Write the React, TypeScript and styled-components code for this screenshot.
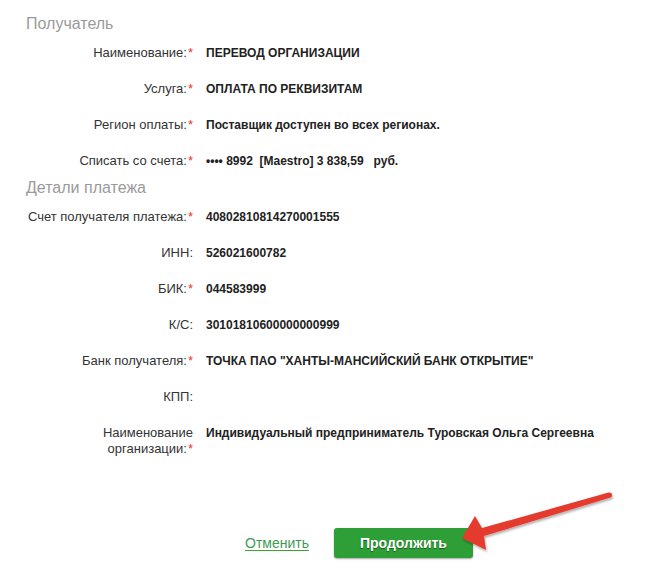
import React from "react";
import styled, { createGlobalStyle } from "styled-components";

const GlobalStyle = createGlobalStyle`
  html, body {
    margin: 0;
    padding: 0;
    background: #fff;
  }
  body {
    font-family: "Liberation Sans", Arial, sans-serif;
    color: #333;
  }
`;

const Page = styled.div`
  position: relative;
  width: 654px;
  height: 582px;
  padding: 15px 0 0 26px;
  box-sizing: border-box;
  overflow: hidden;
`;

const SectionTitle = styled.div`
  font-size: 16px;
  line-height: 18px;
  color: #9a9a9a;
  margin-bottom: 2px;
`;

const Row = styled.div`
  display: grid;
  grid-template-columns: 167px 1fr;
  column-gap: 13px;
  padding: 10px 0;
  line-height: 16px;
  align-items: baseline;
`;

const Label = styled.div`
  text-align: right;
  font-size: 13px;
  color: #333;
`;

const Required = styled.span`
  color: #e8322e;
  margin-left: 1px;
`;

const Value = styled.div`
  font-size: 12px;
  font-weight: bold;
  color: #222;
  white-space: pre;
`;

const Footer = styled.div`
  display: flex;
  align-items: center;
  gap: 25px;
  margin-top: 61px;
  padding-left: 219px;
`;

const CancelLink = styled.a`
  font-size: 14px;
  color: #3f9a55;
  text-decoration: underline;
  text-decoration-color: #3aa52e;
  text-underline-offset: 2px;
  cursor: pointer;
`;

const ContinueButton = styled.button`
  width: 139px;
  height: 30px;
  border: none;
  border-radius: 3px;
  background: #2d9f36;
  box-shadow: 0 1px 2px rgba(0, 0, 0, 0.35);
  color: #fff;
  font-family: "Liberation Sans", Arial, sans-serif;
  font-size: 14px;
  font-weight: bold;
  text-shadow: 0 1px 1px rgba(0, 0, 0, 0.45);
  cursor: pointer;
`;

const Arrow = styled.svg`
  position: absolute;
  left: 0;
  top: 0;
  pointer-events: none;
`;

interface FieldProps {
  label: React.ReactNode;
  value?: string;
  required?: boolean;
}

function Field({ label, value, required }: FieldProps) {
  return (
    <Row>
      <Label>
        {label}
        {required && <Required>*</Required>}
      </Label>
      <Value>{value}</Value>
    </Row>
  );
}

export default function App() {
  return (
    <Page>
      <GlobalStyle />
      <SectionTitle>Получатель</SectionTitle>
      <Field label="Наименование:" value="ПЕРЕВОД ОРГАНИЗАЦИИ" required />
      <Field label="Услуга:" value="ОПЛАТА ПО РЕКВИЗИТАМ" required />
      <Field
        label="Регион оплаты:"
        value="Поставщик доступен во всех регионах."
        required
      />
      <Field
        label="Списать со счета:"
        value="•••• 8992  [Maestro] 3 838,59   руб."
        required
      />
      <SectionTitle>Детали платежа</SectionTitle>
      <Field
        label="Счет получателя платежа:"
        value="40802810814270001555"
        required
      />
      <Field label="ИНН:" value="526021600782" />
      <Field label="БИК:" value="044583999" required />
      <Field label="К/С:" value="30101810600000000999" />
      <Field
        label="Банк получателя:"
        value={'ТОЧКА ПАО "ХАНТЫ-МАНСИЙСКИЙ БАНК ОТКРЫТИЕ"'}
        required
      />
      <Field label="КПП:" />
      <Field
        label={
          <>
            Наименование
            <br />
            организации:
          </>
        }
        value="Индивидуальный предприниматель Туровская Ольга Сергеевна"
        required
      />
      <Footer>
        <CancelLink>Отменить</CancelLink>
        <ContinueButton>Продолжить</ContinueButton>
      </Footer>
      <Arrow width="654" height="582" viewBox="0 0 654 582">
        <defs>
          <filter id="arrowShadow" x="-10%" y="-30%" width="120%" height="160%">
            <feDropShadow dx="1" dy="2" stdDeviation="1.2" floodColor="#000" floodOpacity="0.3" />
          </filter>
        </defs>
        <path
          d="M462 538 L475 516 L482 528 L608.5 492.6 Q612 492.5 612 495 Q612 497.3 610.5 497.6 L484 536 L486 550 Z"
          fill="#e53b2f"
          filter="url(#arrowShadow)"
        />
      </Arrow>
    </Page>
  );
}
